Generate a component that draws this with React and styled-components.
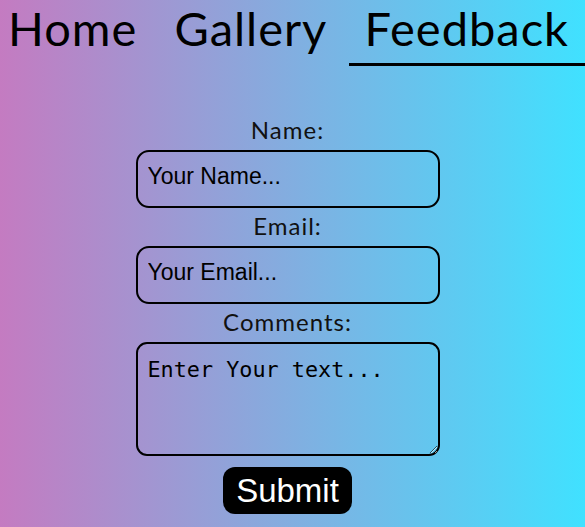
import React from 'react'
import styled, { createGlobalStyle } from 'styled-components'

const GlobalStyle = createGlobalStyle`
  html, body {
    margin: 0;
    padding: 0;
  }
  body {
    min-height: 527px;
    background: linear-gradient(to right, #c47bc1, #40e1ff);
  }
`

const App = () => {
  return (
    <>
      <GlobalStyle />
      <Page>
        <Nav>
          <NavItem $first>Home</NavItem>
          <NavItem>Gallery</NavItem>
          <NavItem $active>Feedback</NavItem>
        </Nav>
        <Form onSubmit={(e) => e.preventDefault()}>
          <Label htmlFor="name">Name:</Label>
          <Input id="name" type="text" placeholder="Your Name..." />
          <Label htmlFor="email">Email:</Label>
          <Input id="email" type="email" placeholder="Your Email..." />
          <Label htmlFor="comments">Comments:</Label>
          <TextArea id="comments" placeholder="Enter Your text..." />
          <SubmitButton type="submit">Submit</SubmitButton>
        </Form>
      </Page>
    </>
  )
}

export default App

const Page = styled.div`
  width: 585px;
  height: 527px;
  display: flex;
  flex-direction: column;
`

const Nav = styled.nav`
  display: flex;
  justify-content: space-between;
  align-items: flex-end;
`

const NavItem = styled.div`
  font-family: 'Lato', sans-serif;
  font-size: 47px;
  letter-spacing: 1px;
  line-height: normal;
  color: #000;
  padding: 0 16px 7px ${(p) => (p.$first ? '8px' : '16px')};
  border-bottom: 3px solid ${(p) => (p.$active ? '#000' : 'transparent')};
  cursor: pointer;
`

const Form = styled.form`
  display: flex;
  flex-direction: column;
  align-items: center;
  margin-top: 49px;
  padding-right: 10px;
`

const Label = styled.label`
  font-family: 'Lato', sans-serif;
  font-size: 24px;
  letter-spacing: 1px;
  line-height: 29px;
  color: #111;
  margin-bottom: 6px;
`

const Input = styled.input`
  box-sizing: border-box;
  width: 304px;
  height: 58px;
  padding: 0 10px 6px;
  margin: 0 0 3px;
  border: 2px solid #000;
  border-radius: 13px;
  background: transparent;
  font-family: 'Liberation Sans', Arial, sans-serif;
  font-size: 23px;
  color: #000;
  outline: none;

  &::placeholder {
    color: #000;
    opacity: 1;
  }
`

const TextArea = styled.textarea`
  box-sizing: border-box;
  width: 304px;
  height: 114px;
  padding: 13px 10px 9px;
  margin: 0 0 11px;
  border: 2px solid #000;
  border-radius: 11px;
  background: transparent;
  font-family: 'DejaVu Sans Mono', monospace;
  font-size: 21.8px;
  color: #000;
  outline: none;

  &::placeholder {
    color: #000;
    opacity: 1;
  }
`

const SubmitButton = styled.button`
  box-sizing: border-box;
  height: 47px;
  padding: 0 13px;
  border: none;
  border-radius: 12px;
  background: #000;
  color: #fff;
  font-family: 'Liberation Sans', Arial, sans-serif;
  font-size: 33px;
  line-height: 1;
  cursor: pointer;
`
